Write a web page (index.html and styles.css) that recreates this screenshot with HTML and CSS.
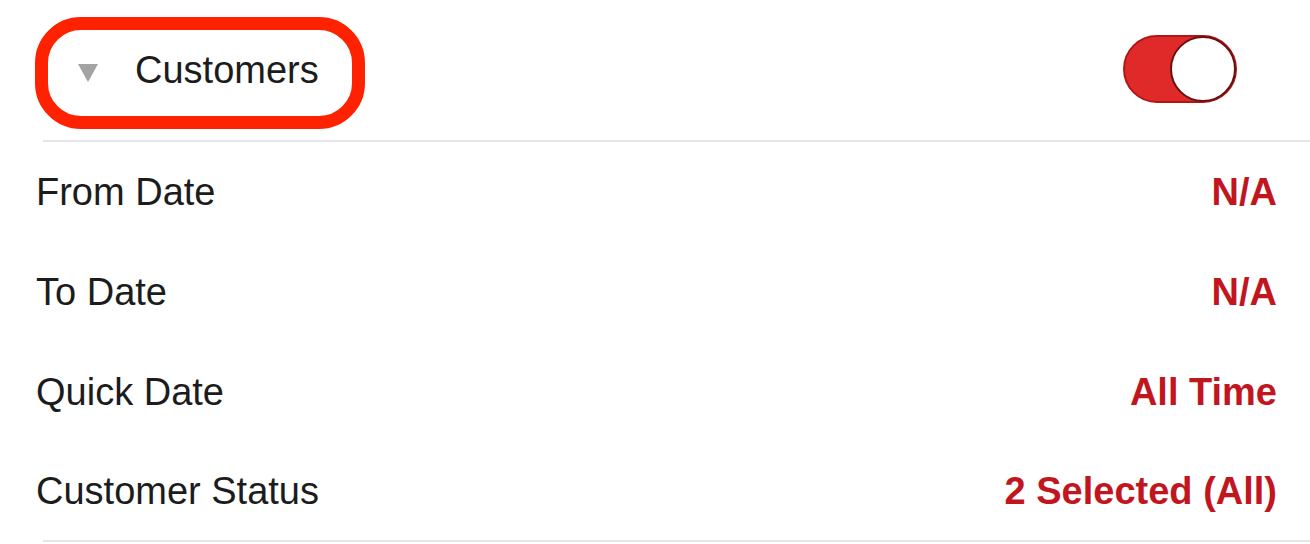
FILE: index.html
```html
<!DOCTYPE html>
<html>
<head>
<meta charset="utf-8">
<link rel="stylesheet" href="styles.css">
</head>
<body>
<div class="panel">
  <div class="header">
    <div class="group-title">
      <span class="caret"></span>
      <span class="title">Customers</span>
    </div>
    <div class="toggle"><span class="knob"></span></div>
  </div>
  <div class="rows">
    <div class="row"><span class="label">From Date</span><span class="value">N/A</span></div>
    <div class="row"><span class="label">To Date</span><span class="value">N/A</span></div>
    <div class="row"><span class="label">Quick Date</span><span class="value">All Time</span></div>
    <div class="row"><span class="label">Customer Status</span><span class="value">2 Selected (All)</span></div>
  </div>
</div>
</body>
</html>
```
FILE: styles.css
```css
html, body {
  margin: 0;
  padding: 0;
  background: #ffffff;
}
body {
  font-family: "Liberation Sans", Arial, sans-serif;
  color: #1c1c1c;
}
.panel {
  width: 1310px;
  height: 544px;
  overflow: hidden;
}
.header {
  display: flex;
  justify-content: space-between;
  align-items: flex-start;
  height: 142px;
  padding: 17px 73px 0 0;
  box-sizing: border-box;
  border-bottom: 2px solid #e6e6e6;
  margin-left: 43px;
}
.group-title {
  display: flex;
  align-items: center;
  height: 112px;
  box-sizing: border-box;
  border: 13px solid #ff2200;
  border-radius: 46px;
  padding: 0 33px 5px 30px;
  margin-left: -8px;
}
.caret {
  width: 0;
  height: 0;
  border-left: 10px solid transparent;
  border-right: 10px solid transparent;
  border-top: 18px solid #a3a3a3;
  margin-right: 37px;
  margin-top: 4px;
}
.title {
  font-size: 38px;
  color: #1c1c1c;
}
.toggle {
  margin-top: 18px;
  width: 114px;
  height: 68px;
  box-sizing: border-box;
  background: #e02a2a;
  border: 2px solid #b01818;
  border-radius: 34px;
  position: relative;
}
.knob {
  position: absolute;
  right: -1px;
  top: -1px;
  width: 66px;
  height: 66px;
  box-sizing: border-box;
  border-radius: 50%;
  background: #ffffff;
  border: 2px solid #6a1010;
}
.rows {
  display: flex;
  flex-direction: column;
}
.row {
  display: flex;
  justify-content: space-between;
  align-items: center;
  height: 100px;
  padding: 0 33px 0 36px;
  font-size: 38px;
}
.row:last-child {
  height: 98px;
  border-bottom: 2px solid #e6e6e6;
  margin-left: 43px;
  padding-left: 0;
}
.row:last-child .label {
  margin-left: -7px;
}
.label {
  color: #1c1c1c;
}
.value {
  color: #c2161f;
  font-weight: bold;
  font-size: 38px;
}
```
